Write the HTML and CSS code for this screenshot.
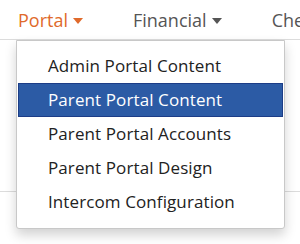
FILE: index.html
```html
<!DOCTYPE html>
<html>
<head>
<meta charset="utf-8">
<link rel="stylesheet" href="styles.css">
</head>
<body>
<div class="page">
  <nav class="nav">
    <div class="nav-item active">Portal<span class="caret"></span></div>
    <div class="nav-item financial">Financial<span class="caret"></span></div>
    <div class="nav-item">Che</div>
  </nav>
  <div class="content">
    <div class="row"></div>
  </div>
  <ul class="dropdown">
    <li class="item">Admin Portal Content</li>
    <li class="item selected">Parent Portal Content</li>
    <li class="item">Parent Portal Accounts</li>
    <li class="item">Parent Portal Design</li>
    <li class="item">Intercom Configuration</li>
  </ul>
</div>
</body>
</html>
```
FILE: styles.css
```css
html, body {
  margin: 0;
  padding: 0;
  background: #fff;
}
.page {
  position: relative;
  width: 300px;
  height: 244px;
  overflow: hidden;
  font-family: "Open Sans", "Noto Sans", sans-serif;
}
.nav {
  display: flex;
  height: 40px;
  border-bottom: 1px solid #dcdcdc;
  padding-left: 18px;
  box-sizing: border-box;
  white-space: nowrap;
}
.nav-item {
  font-size: 18px;
  line-height: 40px;
  color: #555;
  display: flex;
  align-items: center;
}
.nav-item.active {
  color: #e06a2b;
  margin-right: 50px;
}
.nav-item.financial {
  margin-right: 50px;
}
.caret {
  display: inline-block;
  width: 0;
  height: 0;
  margin-left: 5px;
  margin-top: 2px;
  border-left: 5px solid transparent;
  border-right: 5px solid transparent;
  border-top: 6px solid currentColor;
}
.content {
  padding-top: 151px;
}
.row {
  border-top: 1px solid #dcdcdc;
}
.dropdown {
  position: absolute;
  left: 16px;
  top: 40px;
  width: 269px;
  margin: 0;
  padding: 8px 1px 9px;
  box-sizing: border-box;
  list-style: none;
  background: #fff;
  border: 1px solid #c8c8c8;
  border-radius: 0 0 3px 3px;
  box-shadow: 0 6px 12px rgba(0,0,0,0.18);
}
.item {
  height: 34px;
  line-height: 34px;
  padding-left: 30px;
  font-size: 17px;
  letter-spacing: 0.1px;
  color: #222;
  box-sizing: border-box;
  white-space: nowrap;
}
.item.selected {
  background: #2c5ba5;
  color: #fff;
  border: 1px solid #1c3d87;
  line-height: 32px;
  padding-left: 29px;
}
```
